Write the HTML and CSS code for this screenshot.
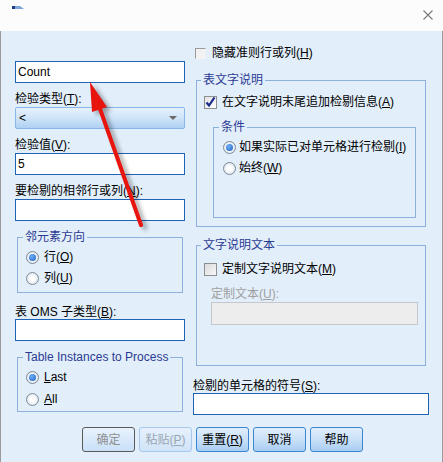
FILE: index.html
```html
<!DOCTYPE html>
<html lang="zh">
<head>
<meta charset="utf-8">
<title>检剔</title>
<link rel="stylesheet" href="styles.css">
</head>
<body>
<div class="titlebar">
  <svg class="app-icon" width="12" height="4" viewBox="0 0 12 4"><rect x="0" y="0" width="3" height="3" fill="#1d3f86"/><path d="M3 0 H8 L12 3 H3 Z" fill="#7fa6d8"/></svg>
  <svg class="close" width="10" height="10" viewBox="0 0 10 10"><path d="M0.5 0.5 L9.5 9.5 M9.5 0.5 L0.5 9.5" stroke="#7a7a7a" stroke-width="1.1"/></svg>
</div>
<div class="dialog">
  <div class="main">
    <div class="left">
      <div class="input">Count</div>
      <div class="label">检验类型(<u>T</u>):</div>
      <div class="select"><span>&lt;</span><span class="caret"></span></div>
      <div class="label">检验值(<u>V</u>):</div>
      <div class="input">5</div>
      <div class="label">要检剔的相邻行或列(<u>N</u>):</div>
      <div class="input"></div>
      <fieldset class="group group-dir">
        <legend>邻元素方向</legend>
        <div class="opt opt-first"><span class="radio on"></span><span>行(<u>O</u>)</span></div>
        <div class="opt"><span class="radio"></span><span>列(<u>U</u>)</span></div>
      </fieldset>
      <div class="label label-oms">表 OMS 子类型(<u>B</u>):</div>
      <div class="input input-oms"></div>
      <fieldset class="group group-inst">
        <legend>Table Instances to Process</legend>
        <div class="opt opt-first"><span class="radio on"></span><span><u>L</u>ast</span></div>
        <div class="opt opt-second"><span class="radio"></span><span><u>A</u>ll</span></div>
      </fieldset>
    </div>
    <div class="right">
      <div class="opt opt-hide"><span class="check check-plain"></span><span>隐藏准则行或列(<u>H</u>)</span></div>
      <fieldset class="box box-caption">
        <legend>表文字说明</legend>
        <div class="opt opt-append"><span class="check checked"><svg width="11" height="11" viewBox="0 0 11 11"><path d="M1.5 5.5 L4 8.5 L9.5 0.5" fill="none" stroke="#1c2a8c" stroke-width="2.2"/></svg></span><span>在文字说明末尾追加检剔信息(<u>A</u>)</span></div>
        <fieldset class="box box-cond">
          <legend>条件</legend>
          <div class="opt opt-first"><span class="radio on"></span><span>如果实际已对单元格进行检剔(<u>I</u>)</span></div>
          <div class="opt"><span class="radio"></span><span>始终(<u>W</u>)</span></div>
        </fieldset>
      </fieldset>
      <fieldset class="box box-text">
        <legend>文字说明文本</legend>
        <div class="opt opt-custom"><span class="check"></span><span>定制文字说明文本(<u>M</u>)</span></div>
        <div class="label label-disabled">定制文本(<u>U</u>):</div>
        <div class="input input-disabled"></div>
      </fieldset>
      <div class="label label-sym">检剔的单元格的符号(<u>S</u>):</div>
      <div class="input input-sym"></div>
    </div>
  </div>
  <div class="buttons">
    <button class="btn btn-default" disabled>确定</button>
    <button class="btn btn-disabled" disabled>粘贴(<u>P</u>)</button>
    <button class="btn">重置(<u>R</u>)</button>
    <button class="btn">取消</button>
    <button class="btn">帮助</button>
  </div>
</div>
<svg class="arrow" width="443" height="462" viewBox="0 0 443 462">
  <g class="arrow-shape">
    <line x1="141" y1="225" x2="99" y2="106" stroke="#e8150e" stroke-width="4" stroke-linecap="round"/>
    <polygon points="90,82 107,107 92,112" fill="#e8150e"/>
  </g>
</svg>
</body>
</html>
```

FILE: styles.css
```css
* { box-sizing: border-box; }

body {
  margin: 0;
  width: 443px;
  height: 462px;
  overflow: hidden;
  position: relative;
  background: #e2eefa;
  font: 12px/16px "Liberation Sans", "Noto Sans CJK SC", sans-serif;
  color: #000;
}

u { text-decoration: underline; text-underline-offset: 1px; }

.titlebar {
  height: 31px;
  background: #fcfcfc;
  display: flex;
  justify-content: space-between;
  align-items: flex-start;
  padding: 0 10px 0 12px;
}
.app-icon { margin-top: 6px; }
.close { margin-top: 10px; }

.dialog {
  height: 431px;
  border-left: 1px solid #9c9c9c;
  border-right: 1px solid #9c9c9c;
  display: flex;
  flex-direction: column;
}

.main {
  display: flex;
  gap: 8px;
  padding-left: 14px;
}

.left { width: 170px; padding-top: 30px; }
.right { width: 236px; padding-top: 14px; }

.input {
  height: 22px;
  border: 1px solid #1e63b6;
  background: #fff;
  padding-left: 2px;
  line-height: 20px;
}

.label { margin-top: 8px; height: 16px; white-space: nowrap; }

.select {
  height: 22px;
  border: 1px solid #86b7e8;
  border-radius: 2px;
  background: linear-gradient(#e6f1fc, #d2e6f9 45%, #afd0f2);
  display: flex;
  justify-content: space-between;
  align-items: center;
  padding: 0 7px 0 3px;
}
.caret {
  width: 0; height: 0;
  border-left: 4.5px solid transparent;
  border-right: 4.5px solid transparent;
  border-top: 4px solid #6a6a6a;
}

fieldset {
  margin: 0;
  min-width: 0;
  border: 1px solid #8cb0db;
}
legend {
  padding: 0 2px;
  line-height: 16px;
  color: #2b3b94;
  white-space: nowrap;
}

.group {
  width: 166px;
  margin: 8px 0 0 2px;
  padding: 0 0 0 5px;
}
.group-dir { height: 64px; }
.group-inst { height: 63px; }
.group .opt { margin-left: 3px; }

.label-oms { margin-top: 11px; }
.input-oms { margin-top: -1px; }

.opt {
  display: flex;
  align-items: center;
  gap: 4px;
  height: 16px;
  white-space: nowrap;
  margin-top: 5px;
}
.opt-first { margin-top: 4px; }
.opt-second { margin-top: 6px; }

.radio {
  width: 13px;
  height: 13px;
  border-radius: 50%;
  border: 1px solid #7d8a99;
  background: radial-gradient(circle, #ffffff 30%, #dfe6ee 75%);
  display: flex;
  align-items: center;
  justify-content: center;
  flex: none;
}
.radio.on::after {
  content: "";
  width: 7px;
  height: 7px;
  border-radius: 50%;
  background: radial-gradient(circle at 40% 35%, #6fb0f5, #1c5fc0);
}
.group .radio { margin-right: 1px; }

.check {
  width: 13px;
  height: 13px;
  border: 1px solid #8e8f8f;
  background: linear-gradient(135deg, #dcdcdc, #f6f6f6);
  flex: none;
  display: flex;
  align-items: center;
  justify-content: center;
  margin-right: 1px;
}
.check.checked { background: linear-gradient(135deg, #e3e3e3, #ffffff); }
.check-plain {
  width: 11px;
  height: 11px;
  border-right-color: transparent;
  border-bottom-color: transparent;
  border-color: #9a9a9a transparent transparent #9a9a9a;
  background: #f2f2f2;
  margin: 0 6px 0 2px;
}

.opt-hide { margin-top: 0; gap: 0; }

.box { padding: 0 0 0 4px; }
.box-caption { height: 155px; width: 230px; margin: 11px 0 0 3px; }
.opt-append { margin: 6px 0 0 3px; }
.box-cond {
  height: 99px;
  width: 203px;
  margin: 9px 0 0 12px;
  padding-left: 5px;
}
.box-cond .opt { margin-left: 4px; gap: 3px; }
.box-cond .opt-first { margin-top: 4px; }

.box-text { height: 129px; width: 230px; margin: 10px 0 0 3px; }
.opt-custom { margin: 8px 0 0 3px; }
.label-disabled { margin: 9px 0 0 10px; color: #a0a0a0; }
.input-disabled {
  margin-left: 10px;
  width: 207px;
  height: 23px;
  border-color: #c4c8cc;
  background: #ededed;
}

.label-sym { margin-top: 12px; }
.input-sym { margin-top: -1px; }

.buttons {
  display: flex;
  gap: 4px;
  padding-left: 81px;
  margin-top: 12px;
}
.btn {
  width: 53px;
  height: 25px;
  padding: 0;
  border: 1px solid #3a86d3;
  border-radius: 3px;
  background: linear-gradient(#e1eefc, #c9e0f8 50%, #a8cdf2);
  font: 12px/16px "Liberation Sans", "Noto Sans CJK SC", sans-serif;
  color: #000;
}
.btn-default {
  border-color: #5a5a5a;
  color: #8f8f8f;
  background: linear-gradient(#e8f2fd, #c9e0f8);
}
.btn-disabled {
  border-color: #a8c9ee;
  color: #9aa6b3;
  background: linear-gradient(#e6f1fc, #d0e4f8);
}

.arrow {
  position: absolute;
  left: 0;
  top: 0;
  pointer-events: none;
}
.arrow-shape { filter: drop-shadow(4px 3px 2px rgba(0,0,0,0.35)); }
```
